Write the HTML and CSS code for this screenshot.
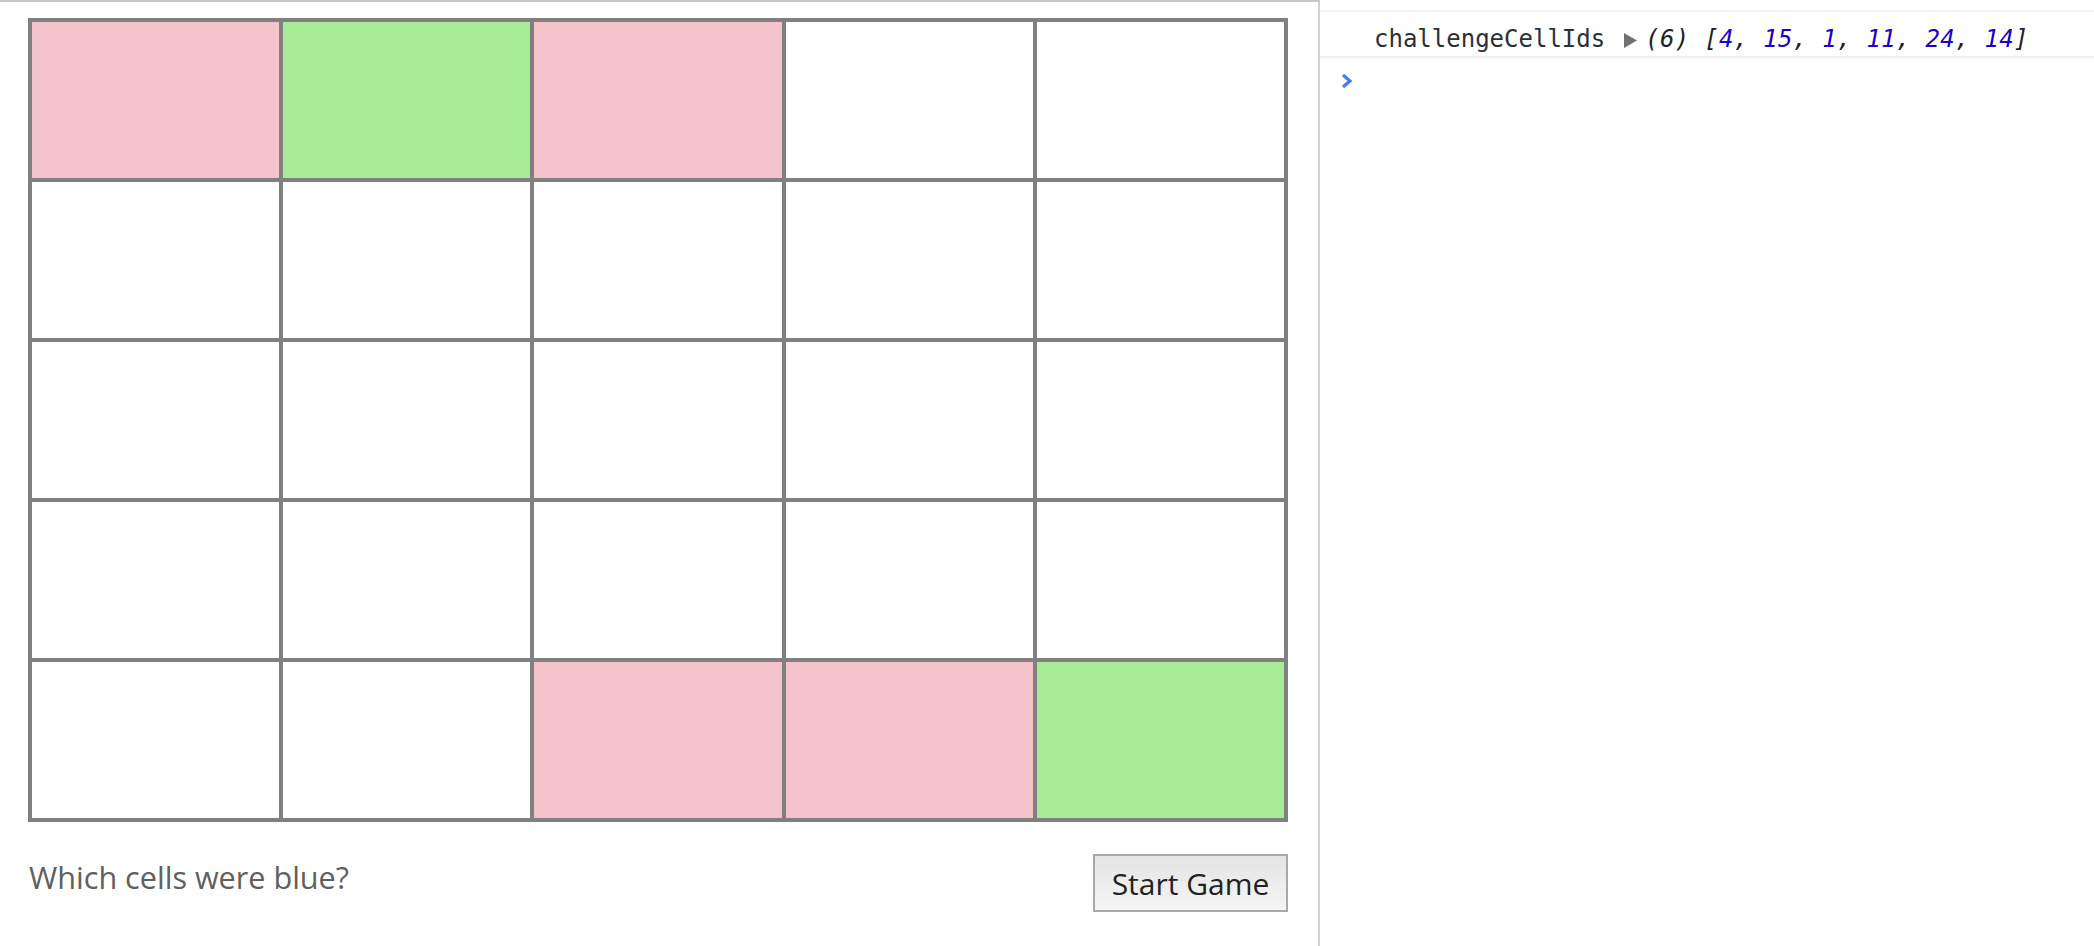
FILE: index.html
```html
<!DOCTYPE html>
<html>
<head>
<meta charset="utf-8">
<title>Memory Grid</title>
<link rel="stylesheet" href="styles.css">
</head>
<body>
<div class="page">
  <main class="game">
    <div class="grid">
      <div class="cell wrong"></div>
      <div class="cell right"></div>
      <div class="cell wrong"></div>
      <div class="cell"></div>
      <div class="cell"></div>

      <div class="cell"></div>
      <div class="cell"></div>
      <div class="cell"></div>
      <div class="cell"></div>
      <div class="cell"></div>

      <div class="cell"></div>
      <div class="cell"></div>
      <div class="cell"></div>
      <div class="cell"></div>
      <div class="cell"></div>

      <div class="cell"></div>
      <div class="cell"></div>
      <div class="cell"></div>
      <div class="cell"></div>
      <div class="cell"></div>

      <div class="cell"></div>
      <div class="cell"></div>
      <div class="cell wrong"></div>
      <div class="cell wrong"></div>
      <div class="cell right"></div>
    </div>
    <div class="controls">
      <p class="prompt">Which cells were blue?</p>
      <button class="start">Start Game</button>
    </div>
  </main>
  <aside class="console">
    <div class="row clipped"></div>
    <div class="row log"><span class="key">challengeCellIds</span><span class="expand"><svg width="13" height="15" viewBox="0 0 13 15"><path d="M0 0 L13 7.5 L0 15 Z" fill="#727272"/></svg></span><span class="arr">(6) [<span class="num">4</span>, <span class="num">15</span>, <span class="num">1</span>, <span class="num">11</span>, <span class="num">24</span>, <span class="num">14</span>]</span></div>
    <div class="prompt-row">
      <svg width="12" height="16" viewBox="0 0 12 16"><path d="M2 2 L9 8 L2 14" fill="none" stroke="#3f7ff0" stroke-width="3.2" stroke-linejoin="miter"/></svg>
    </div>
  </aside>
</div>
</body>
</html>
```

FILE: styles.css
```css
html, body {
  margin: 0;
  padding: 0;
  background: #ffffff;
  overflow: hidden;
}

.page {
  display: flex;
  height: 946px;
  overflow: hidden;
}

.game {
  box-sizing: border-box;
  width: 1320px;
  flex: none;
  border-top: 2px solid #cbc7c3;
  border-right: 2px solid #d0d0d0;
  padding: 16px 30px 0 28px;
  font-family: "Open Sans", "Noto Sans", sans-serif;
}

.grid {
  box-sizing: border-box;
  width: 1260px;
  display: grid;
  grid-template-columns: repeat(5, 1fr);
  border: 2px solid #808080;
}

.cell {
  box-sizing: border-box;
  height: 160px;
  border: 2px solid #808080;
  background: #ffffff;
}

.cell.wrong {
  background: #f4c3cc;
}

.cell.right {
  background: #a8ec98;
}

.controls {
  display: flex;
  justify-content: space-between;
  align-items: flex-start;
  margin-top: 32px;
}

.prompt {
  margin: 3px 0 0 1px;
  font-size: 30.6px;
  line-height: 40px;
  color: #606060;
}

.start {
  box-sizing: border-box;
  width: 195px;
  height: 58px;
  border: 2px solid #a9a9a9;
  border-radius: 0;
  background: linear-gradient(#e4e4e4, #f5f5f5);
  font-family: "Open Sans", "Noto Sans", sans-serif;
  font-size: 30px;
  color: #222222;
  padding: 0;
  margin: 0;
}

.console {
  flex: 1;
  font-family: "DejaVu Sans Mono", monospace;
  font-size: 24px;
  color: #303942;
}

.row {
  box-sizing: border-box;
  border-bottom: 2px solid #f0f0f0;
}

.clipped {
  height: 12px;
}

.log {
  height: 46px;
  padding: 13px 0 0 54px;
  line-height: 28px;
  white-space: nowrap;
}

.key {
  color: #28313a;
}

.expand {
  display: inline-block;
  width: 40px;
  padding-left: 19px;
  box-sizing: border-box;
  vertical-align: -1px;
}

.arr {
  font-style: italic;
  color: #222222;
  letter-spacing: 0.3px;
}

.num {
  color: #1c00cf;
}

.prompt-row {
  padding: 15px 0 0 21px;
}

.prompt-row svg {
  display: block;
}
```
